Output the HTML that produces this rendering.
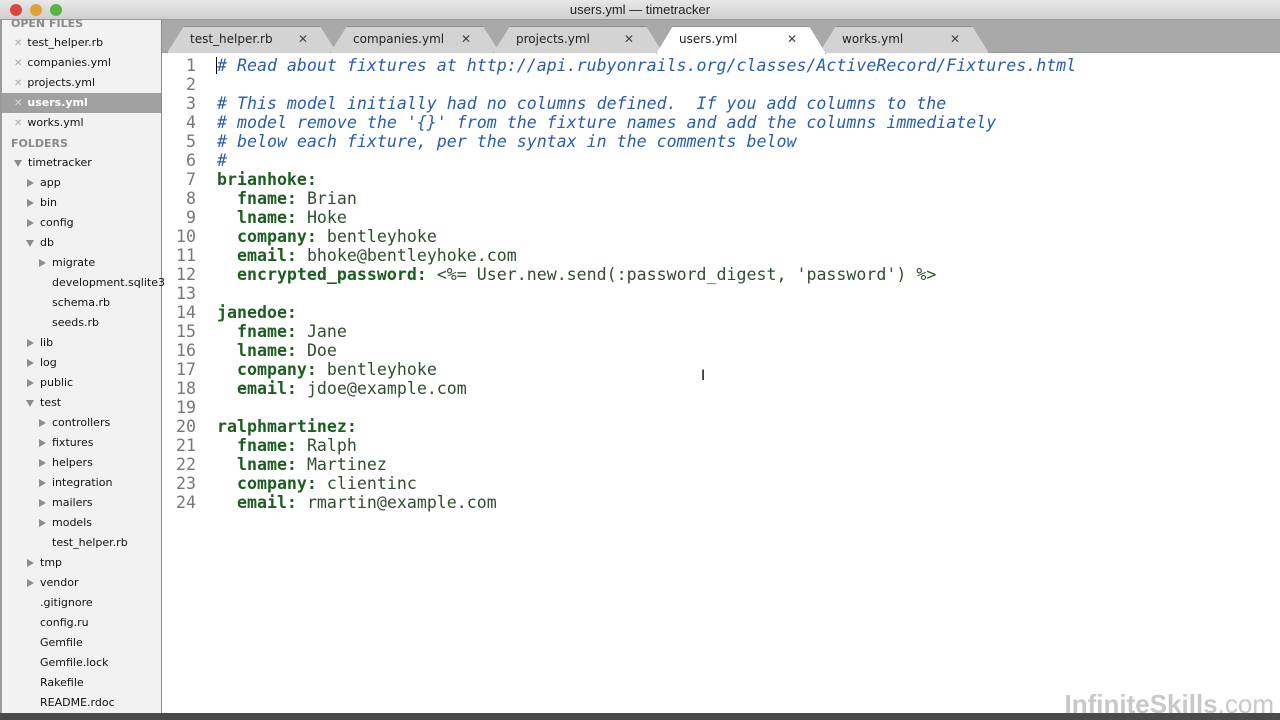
<!DOCTYPE html>
<html><head><meta charset="utf-8"><style>
*{margin:0;padding:0;box-sizing:border-box}
body{width:1280px;height:720px;overflow:hidden;background:#fff;position:relative;font-family:"DejaVu Sans","Liberation Sans",sans-serif}
#title{position:absolute;left:0;top:0;width:1280px;height:20px;background:linear-gradient(#e8e8e8,#cfcfcf);border-bottom:1px solid #999;text-align:center;font-size:13px;line-height:19px;color:#222;font-family:"Liberation Sans",sans-serif}
.dot{position:absolute;top:4px;width:12px;height:12px;border-radius:50%}
#side{position:absolute;left:0;top:20px;width:162px;height:693px;background:#f2f2f2;border-right:1px solid #8a8a8a;border-left:2px solid #9a9a9a;font-size:11px;color:#111}
.it{position:absolute;height:20px;line-height:20px;white-space:nowrap}
.hd{position:absolute;font-weight:bold;color:#8a8a8a;font-size:11px}
.ar{position:absolute;width:0;height:0}
.ar.r{border-left:7px solid #8d8d8d;border-top:4px solid transparent;border-bottom:4px solid transparent}
.ar.d{border-top:7px solid #8d8d8d;border-left:4px solid transparent;border-right:4px solid transparent}
.x{color:#aaa;font-size:10px;margin-right:5px}
#tabs{position:absolute;left:162px;top:20px;width:1118px;height:33px;background:#a9a9a9;border-bottom:1px solid #999}
.tab{position:absolute;top:6px;height:27px;width:170px;background:#d3d3d3;border:1px solid #8d8d8d;border-bottom:none;border-radius:10px 10px 0 0;clip-path:polygon(0 100%,10% 0,90% 0,100% 100%);font-size:12px;line-height:25px;padding-left:22px;color:#222}
.tab.a{background:#fff}
.tab span{position:absolute;right:28px;top:0;color:#444}
#code{position:absolute;left:162px;top:53px;font-family:"DejaVu Sans Mono","Liberation Mono",monospace;font-size:16.6px;line-height:19px;white-space:pre}
.ln{position:absolute;left:0;width:34px;text-align:right;color:#777}
.tx{position:absolute;left:55px}
.c{color:#2a5db0;font-style:italic}
.k{color:#1b5e20;font-weight:bold}
.v{color:#2f4f2f}
#status{position:absolute;left:0;top:713px;width:1280px;height:7px;background:#4a4a4a}
#wm{position:absolute;right:6px;top:689px;font-family:"Liberation Sans",sans-serif;font-size:26px;font-weight:bold;color:#c8c8c8}
</style></head><body>
<div id="title">users.yml — timetracker
<div class="dot" style="left:10px;background:#e0443e"></div>
<div class="dot" style="left:30px;background:#dea236"></div>
<div class="dot" style="left:50px;background:#5ab443"></div>
</div>
<div id="side">
<div class="hd" style="left:9px;top:-3px">OPEN FILES</div>
<div class="it" style="left:12px;top:13px"><span class="x">✕</span>test_helper.rb</div>
<div class="it" style="left:12px;top:33px"><span class="x">✕</span>companies.yml</div>
<div class="it" style="left:12px;top:53px"><span class="x">✕</span>projects.yml</div>
<div style="position:absolute;left:0;top:73px;width:159px;height:20px;background:#a0a0a0"></div>
<div class="it" style="left:12px;top:73px;color:#fff;font-weight:bold"><span class="x" style="color:#ddd">✕</span>users.yml</div>
<div class="it" style="left:12px;top:93px"><span class="x">✕</span>works.yml</div>
<div class="hd" style="left:9px;top:117px">FOLDERS</div>
<div class="ar d" style="left:12px;top:140px"></div><div class="it" style="left:26px;top:133px">timetracker</div>
<div class="ar r" style="left:25px;top:159px"></div><div class="it" style="left:38px;top:153px">app</div>
<div class="ar r" style="left:25px;top:179px"></div><div class="it" style="left:38px;top:173px">bin</div>
<div class="ar r" style="left:25px;top:199px"></div><div class="it" style="left:38px;top:193px">config</div>
<div class="ar d" style="left:24px;top:220px"></div><div class="it" style="left:38px;top:213px">db</div>
<div class="ar r" style="left:37px;top:239px"></div><div class="it" style="left:50px;top:233px">migrate</div>
<div class="it" style="left:50px;top:253px">development.sqlite3</div>
<div class="it" style="left:50px;top:273px">schema.rb</div>
<div class="it" style="left:50px;top:293px">seeds.rb</div>
<div class="ar r" style="left:25px;top:319px"></div><div class="it" style="left:38px;top:313px">lib</div>
<div class="ar r" style="left:25px;top:339px"></div><div class="it" style="left:38px;top:333px">log</div>
<div class="ar r" style="left:25px;top:359px"></div><div class="it" style="left:38px;top:353px">public</div>
<div class="ar d" style="left:24px;top:380px"></div><div class="it" style="left:38px;top:373px">test</div>
<div class="ar r" style="left:37px;top:399px"></div><div class="it" style="left:50px;top:393px">controllers</div>
<div class="ar r" style="left:37px;top:419px"></div><div class="it" style="left:50px;top:413px">fixtures</div>
<div class="ar r" style="left:37px;top:439px"></div><div class="it" style="left:50px;top:433px">helpers</div>
<div class="ar r" style="left:37px;top:459px"></div><div class="it" style="left:50px;top:453px">integration</div>
<div class="ar r" style="left:37px;top:479px"></div><div class="it" style="left:50px;top:473px">mailers</div>
<div class="ar r" style="left:37px;top:499px"></div><div class="it" style="left:50px;top:493px">models</div>
<div class="it" style="left:50px;top:513px">test_helper.rb</div>
<div class="ar r" style="left:25px;top:539px"></div><div class="it" style="left:38px;top:533px">tmp</div>
<div class="ar r" style="left:25px;top:559px"></div><div class="it" style="left:38px;top:553px">vendor</div>
<div class="it" style="left:38px;top:573px">.gitignore</div>
<div class="it" style="left:38px;top:593px">config.ru</div>
<div class="it" style="left:38px;top:613px">Gemfile</div>
<div class="it" style="left:38px;top:633px">Gemfile.lock</div>
<div class="it" style="left:38px;top:653px">Rakefile</div>
<div class="it" style="left:38px;top:673px">README.rdoc</div>
</div>
<div id="tabs">
<div class="tab" style="left:5px">test_helper.rb<span>✕</span></div>
<div class="tab" style="left:168px">companies.yml<span>✕</span></div>
<div class="tab" style="left:331px">projects.yml<span>✕</span></div>
<div class="tab" style="left:657px">works.yml<span>✕</span></div>
<div class="tab a" style="left:494px;height:28px">users.yml<span>✕</span></div>
</div>
<div id="code">
<div class="ln" style="top:3px">1</div><div class="tx c" style="top:3px"># Read about fixtures at http://api.rubyonrails.org/classes/ActiveRecord/Fixtures.html</div>
<div class="ln" style="top:22px">2</div>
<div class="ln" style="top:41px">3</div><div class="tx c" style="top:41px"># This model initially had no columns defined.  If you add columns to the</div>
<div class="ln" style="top:60px">4</div><div class="tx c" style="top:60px"># model remove the '{}' from the fixture names and add the columns immediately</div>
<div class="ln" style="top:79px">5</div><div class="tx c" style="top:79px"># below each fixture, per the syntax in the comments below</div>
<div class="ln" style="top:98px">6</div><div class="tx c" style="top:98px">#</div>
<div class="ln" style="top:117px">7</div><div class="tx" style="top:117px"><span class="k">brianhoke:</span></div>
<div class="ln" style="top:136px">8</div><div class="tx" style="top:136px">  <span class="k">fname:</span> <span class="v">Brian</span></div>
<div class="ln" style="top:155px">9</div><div class="tx" style="top:155px">  <span class="k">lname:</span> <span class="v">Hoke</span></div>
<div class="ln" style="top:174px">10</div><div class="tx" style="top:174px">  <span class="k">company:</span> <span class="v">bentleyhoke</span></div>
<div class="ln" style="top:193px">11</div><div class="tx" style="top:193px">  <span class="k">email:</span> <span class="v">bhoke@bentleyhoke.com</span></div>
<div class="ln" style="top:212px">12</div><div class="tx" style="top:212px">  <span class="k">encrypted_password:</span> <span class="v">&lt;%= User.new.send(:password_digest, 'password') %&gt;</span></div>
<div class="ln" style="top:231px">13</div>
<div class="ln" style="top:250px">14</div><div class="tx" style="top:250px"><span class="k">janedoe:</span></div>
<div class="ln" style="top:269px">15</div><div class="tx" style="top:269px">  <span class="k">fname:</span> <span class="v">Jane</span></div>
<div class="ln" style="top:288px">16</div><div class="tx" style="top:288px">  <span class="k">lname:</span> <span class="v">Doe</span></div>
<div class="ln" style="top:307px">17</div><div class="tx" style="top:307px">  <span class="k">company:</span> <span class="v">bentleyhoke</span></div>
<div class="ln" style="top:326px">18</div><div class="tx" style="top:326px">  <span class="k">email:</span> <span class="v">jdoe@example.com</span></div>
<div class="ln" style="top:345px">19</div>
<div class="ln" style="top:364px">20</div><div class="tx" style="top:364px"><span class="k">ralphmartinez:</span></div>
<div class="ln" style="top:383px">21</div><div class="tx" style="top:383px">  <span class="k">fname:</span> <span class="v">Ralph</span></div>
<div class="ln" style="top:402px">22</div><div class="tx" style="top:402px">  <span class="k">lname:</span> <span class="v">Martinez</span></div>
<div class="ln" style="top:421px">23</div><div class="tx" style="top:421px">  <span class="k">company:</span> <span class="v">clientinc</span></div>
<div class="ln" style="top:440px">24</div><div class="tx" style="top:440px">  <span class="k">email:</span> <span class="v">rmartin@example.com</span></div>
</div>
<div style="position:absolute;left:216px;top:57px;width:1px;height:17px;background:#000"></div>
<div style="position:absolute;left:701px;top:368px;font-size:14px;color:#000">I</div>
<div id="wm">InfiniteSkills<span style="font-weight:normal">.com</span></div>
<div id="status"></div>
</body></html>
